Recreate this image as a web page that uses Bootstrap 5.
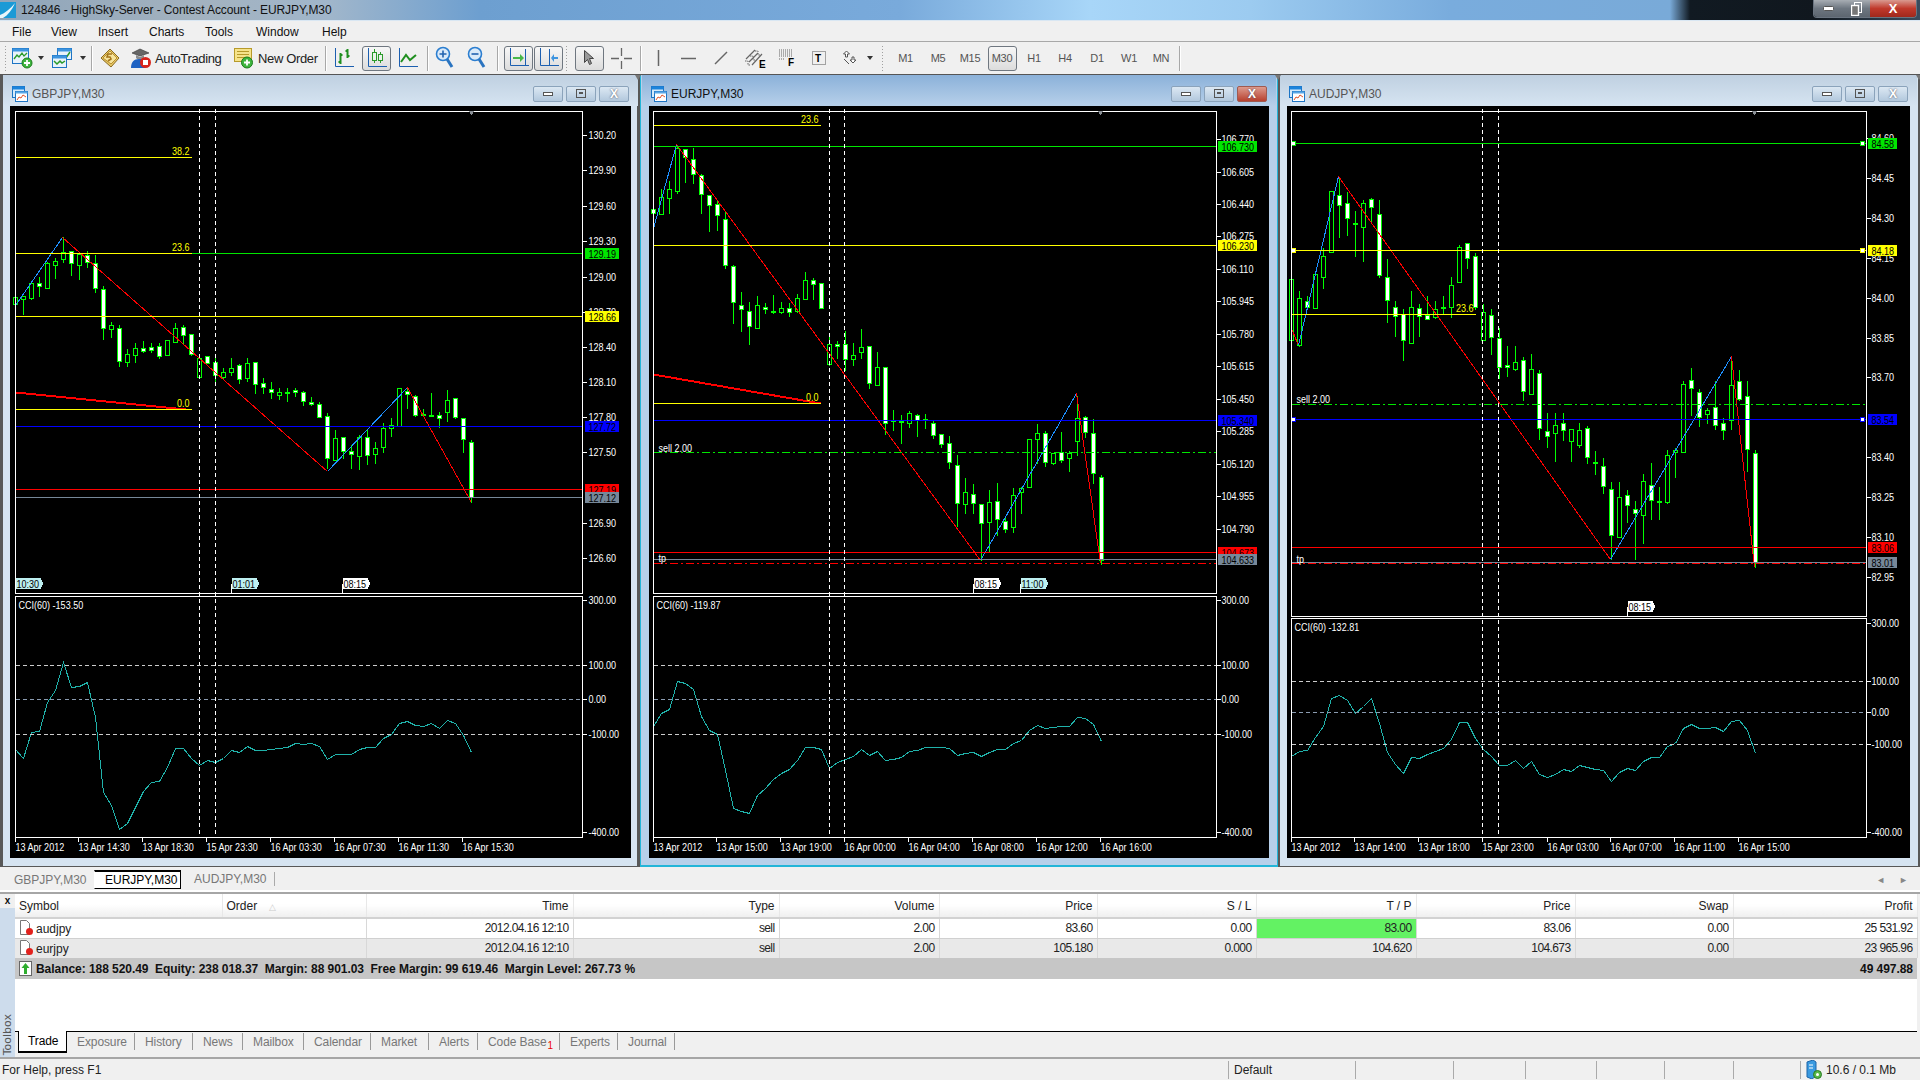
<!DOCTYPE html>
<html lang="en">
<head>
<meta charset="UTF-8">
<title>124846 - HighSky-Server - Contest Account - EURJPY,M30</title>
<link href="https://cdn.jsdelivr.net/npm/bootstrap@5.3.0/dist/css/bootstrap.min.css" rel="stylesheet">
<style>
html, body { height: 100%; }
body { width: 1920px; height: 1080px; overflow: hidden; background: #f0f0f0; color: #222; font: 12px/1 "Liberation Sans", sans-serif; }

/* title bar */
.titlebar { height: 21px; background: linear-gradient(90deg, #8fa5ba 0, #a3b2bf 200px, #a0b6cb 330px, #6d9fd0 480px, #79aadb 900px, #a8d6f8 1090px, #9ccbf0 1250px, #79acdd 1450px, #79aad8 1670px, #111a22 1690px, #10171e 1815px, #3a4c5e 1920px); border-bottom: 1px solid #d9e7f3; }
.titlebar .title { padding-left: 21px; letter-spacing: -.1px; line-height: 20px; color: #111; }
.titlebar .app-logo { position: absolute; left: 0; top: 2px; }
.caption-btns { position: absolute; right: 3px; top: 0; height: 18px; border: 1px solid #6a7480; border-top: 0; border-radius: 0 0 4px 4px; overflow: hidden; }
.caption-btns span { display: flex; align-items: center; justify-content: center; height: 17px; color: #fff; font: bold 13px/1 "Liberation Sans", sans-serif; }
.caption-btns .cb-min, .caption-btns .cb-max { width: 28px; background: linear-gradient(#a7adb3, #6d7680 50%, #5d6670); }
.caption-btns .cb-close { width: 46px; background: linear-gradient(#d99a90, #c0392b 50%, #a0281c); }

/* menu */
.menubar { display: grid; grid-template-columns: 39px 47px 51px 56px 51px 66px auto; height: 21px; padding: 2px 0 0 12px; align-items: center; color: #111; border-bottom: 1px solid #a8a8a8; }

/* toolbar */
.toolbar { display: grid; grid-template-columns: 8px 24px 13px 30px 11px 6px 32px 29px 73px 30px 62px 10px 28px 37px 26px 12px 24px 6px 28px 0 12px 30px 30px 8px 36px 28px 10px 27px 33px 32px 35px 30px 33px 30px 10px 15px 31px 34px 30px 34px 30px 32px 32px 32px 32px 4px; height: 32px; padding-left: 2px; align-items: center; justify-items: center; font-size: 13px; color: #222; }
.toolbar .lbl { justify-self: start; white-space: nowrap; letter-spacing: -.35px; }
.toolbar .sep { width: 1px; height: 25px; background: #a8a8a8; box-shadow: 1px 0 #fff; }
.toolbar .grip { width: 4px; height: 26px; background-image: radial-gradient(#a0a0a0 40%, transparent 45%); background-size: 3px 3px; }
.toolbar .ddn { width: 0; height: 0; border-left: 3.5px solid transparent; border-right: 3.5px solid transparent; border-top: 4px solid #333; }
.toolbar .tf { color: #555; font-size: 11px; letter-spacing: -.3px; }
.tool-on { display: flex; align-items: center; justify-content: center; width: 29px; height: 25px; border: 1px solid #6f7780; border-radius: 3px; background: linear-gradient(#f7f7f7, #dcdcdc); }
.tool-letter { font: bold 10px/1 "Liberation Sans", sans-serif; fill: #000; }

/* mdi windows */
.mdi { height: 793px; background: #585858; border-top: 1px solid #555; }
.win { height: 792px; position: relative; background: #d6e4f1; border: 1px solid #585858; border-top: 0; }
.win::before { content: ""; position: absolute; right: -4px; top: 0; border-left: 3px solid transparent; border-right: 3px solid transparent; border-top: 5px solid #777; z-index: 2; }
.win-1 { width: 636px; margin-left: 2px; padding: 0 6px 0 7px; }
.win-2 { width: 638px; margin-left: 2px; padding: 0 8px 0 8px; }
.win-3 { width: 640px; margin-left: 1px; padding: 0 8px 0 7px; }
.win-active { background: #b7d0ea; border-color: #23b5d8; border-bottom-width: 2px; }
.win-head { height: 31px; margin: 0 -7px; padding: 6px 9px 0; background: linear-gradient(#bfd0e1, #d6e4f1); color: #555; }
.win-active .win-head { background: linear-gradient(#8bb1d9, #b7d0ea); color: #111; }
.win-btn { display: flex; align-items: center; justify-content: center; width: 30px; height: 16px; margin-left: 3px; border: 1px solid #8ba3bb; border-radius: 2px; background: linear-gradient(#dce8f3, #b2c8dd); color: #4a5560; }
.win-btn.b-close { font: bold 12px/1 "Liberation Sans", sans-serif; color: #fff; text-shadow: 0 0 2px #445; }
.win-active .win-btn.b-close { background: linear-gradient(#dd9b8e, #b8402e); border-color: #a05a50; }
.chart-area { display: block; background: #000; width: 100%; height: 752px; }
.chart-area text { font: 11px "Liberation Sans", sans-serif; fill: #fff; }
.chart-area text.dark { fill: #000; }
.chart-area text.gold { fill: #ff0; }

/* chart tabs */
.doc-tabs { height: 25px; padding: 3px 0 0 2px; color: #777; position: relative; border-bottom: 2px solid #fff; }
.doc-tabs .tab { display: flex; align-items: center; height: 19px; padding-left: 12px; }
.doc-tabs .tab-1 { width: 92px; }
.doc-tabs .tab-2 { width: 87px; color: #000; background: #fff; border: 1px solid #000; border-top-width: 2px; border-left-color: #fff; border-bottom-width: 1px; padding-left: 10px; }
.doc-tabs .tab-3 { width: 94px; border-right: 1px solid #aaa; height: 14px; margin-top: 2px; padding-left: 13px; }
.doc-tabs .nav-arrows { margin-left: auto; padding-right: 12px; gap: 14px; color: #888; font-size: 9px; }

/* toolbox */
.toolbox { height: 165px; border-top: 2px solid #a6a6a6; }
.tb-strip { width: 15px; background: #cddcec; position: relative; color: #555; }
.tb-strip .tb-x { height: 14px; background: #f0f0f0; text-align: center; font: bold 10px/14px "Liberation Sans", sans-serif; color: #111; }
.tb-strip .tb-name { writing-mode: vertical-rl; transform: rotate(180deg); margin-top: auto; padding: 2px 0 3px; font: 11px/15px "DejaVu Sans", sans-serif; }
.terminal { width: 1902px; height: 137px; background: #fff; }
.terminal table { table-layout: fixed; width: 1902px; margin: 0; --bs-table-bg: transparent; font-size: 12px; color: #222; }
.terminal th, .terminal td { padding: 0 4px; border: 0; font-weight: 400; vertical-align: middle; white-space: nowrap; }
.terminal thead th { height: 24px; padding-top: 1px; background: linear-gradient(#fff 45%, #efefef); border-right: 1px solid #e8e8e8; border-bottom: 2px solid #d2d2d2; color: #222; }
.terminal tbody td { height: 20px; border-right: 1px solid #d8d8d8; border-bottom: 1px solid #d0d0d0; letter-spacing: -.6px; }
.terminal tbody td:first-child { letter-spacing: 0; border-right: 0; }
.terminal tbody tr.alt td { background: #e9e9e9; border-bottom: 0; }
.terminal tbody tr.total td { height: 21px; background: #c6c6c6; border: 0; font-weight: 700; color: #111; letter-spacing: -.05px; }
.terminal td.tp-hit { background: #63f263; }
.c-sym { width: 207px; } .c-ord { width: 144px; } .c-time { width: 207px; } .c-type { width: 206px; } .c-vol { width: 160px; }
.c-price { width: 158px; } .c-sl { width: 159px; } .c-tp { width: 160px; } .c-price2 { width: 159px; } .c-swap { width: 158px; } .c-profit { width: 184px; }
.sym-ic { margin-right: 2px; vertical-align: -3px; }
.sort-mark { color: #ccc; font-size: 9px; margin-left: 8px; }
.term-tabs { display: grid; grid-template-columns: 3px 49px 68px 58px 50px 61px 67px 58px 49px 82px 58px 57px; height: 26px; background: #f0f0f0; border-top: 1px solid #000; color: #777; letter-spacing: -.1px; }
.term-tabs .t { display: flex; align-items: center; height: 17px; padding-left: 10px; border-right: 1px solid #999; margin-top: 1px; }
.term-tabs .t-on { margin-top: -1px; height: 22px; background: #fff; color: #000; border: 1px solid #000; border-top: 0; border-bottom-width: 2px; padding-left: 9px; }
.term-tabs sub { color: #e00; font-size: 10px; bottom: -.4em; margin-left: 1px; }

/* status */
.statusbar { display: grid; grid-template-columns: 1228px 127px 98px 72px 71px 68px 69px 67px auto; height: 23px; border-top: 2px solid #a6a6a6; align-items: center; color: #222; }
.statusbar > div { height: 18px; line-height: 18px; padding-left: 5px; border-left: 1px solid #aaa; }
.statusbar > div:first-child { border: 0; padding-left: 2px; }
</style>
</head>
<body class="d-flex flex-column">

<!-- title bar -->
<div class="titlebar position-relative">
  <svg class="app-logo" width="16" height="16" viewBox="0 0 16 16"><rect width="16" height="16" fill="#1b9ad6"/><path d="M0 13C5 11 10 7 15 1 12 8 8 13 3 16H0z" fill="#e9f6fb"/></svg>
  <div class="title">124846 - HighSky-Server - Contest Account - EURJPY,M30</div>
  <div class="caption-btns d-flex">
    <span class="cb-min"><svg width="11" height="5"><rect x=".5" y=".5" width="10" height="4" rx="1" fill="#fff" stroke="#555"/></svg></span>
    <span class="cb-max"><svg width="11" height="14"><rect x="3.5" y=".5" width="7" height="10" fill="none" stroke="#fff"/><rect x=".5" y="3.5" width="7" height="10" fill="#777" stroke="#fff" stroke-width="1.4"/></svg></span>
    <span class="cb-close">X</span>
  </div>
</div>

<!-- menu -->
<div class="menubar"><span>File</span><span>View</span><span>Insert</span><span>Charts</span><span>Tools</span><span>Window</span><span>Help</span></div>

<!-- toolbar -->
<div class="toolbar">
  <span class="grip"></span>
  <svg width="22" height="22" viewBox="0 0 22 22"><rect x="1.5" y="1.5" width="16" height="15" fill="#e8f2fb" stroke="#1c74c4"/><rect x="1.5" y="1.5" width="16" height="3" fill="#3d94df"/><path d="M3 12l3-4 2 2 3-4 2 3 3-3" fill="none" stroke="#2a9a2a" stroke-width="1.3"/><circle cx="16" cy="16" r="5" fill="#3eb53e" stroke="#1d7d1d"/><path d="M16 13v6M13 16h6" stroke="#fff" stroke-width="1.8"/></svg>
  <span class="ddn"></span>
  <svg width="22" height="22" viewBox="0 0 22 22"><rect x="6.5" y="1.5" width="14" height="11" fill="#e8f2fb" stroke="#1c74c4"/><rect x="6.5" y="1.5" width="14" height="3" fill="#3d94df"/><path d="M12 9l3 2 4-6" fill="none" stroke="#2a9a2a" stroke-width="1.5"/><rect x="1.5" y="8.5" width="14" height="12" fill="#e8f2fb" stroke="#1c74c4"/><rect x="1.5" y="8.5" width="14" height="3" fill="#3d94df"/><path d="M3 14l3 3 3-3 2 2 3-2" fill="none" stroke="#2a9a2a" stroke-width="1.5"/></svg>
  <span class="ddn"></span>
  <span class="sep"></span>
  <svg width="22" height="22" viewBox="0 0 22 22"><path d="M2 11L11 2l9 9-8 9z" fill="#e7c766" stroke="#8a6a1f"/><path d="M4 11l7-7 7 7-6 6z" fill="#f6e39b" stroke="#b8902f"/><path d="M13 7H9l-1 3h3l1 2-3 2" fill="none" stroke="#a5761c" stroke-width="1.6"/></svg>
  <svg width="22" height="22" viewBox="0 0 22 22"><path d="M2 6l8-4 9 4-9 3z" fill="#666" stroke="#333" stroke-width=".6"/><path d="M6 8v3c2 2 6 2 8 0V8l-4 2z" fill="#8c8c8c"/><path d="M1 21c0-6 3-9 8-9s6 2 6 4v5z" fill="#1f62c2"/><circle cx="15.500" cy="15.500" r="5.500" fill="#d8241c"/><rect x="13" y="13" width="5" height="5" fill="#fff"/></svg>
  <span class="lbl">AutoTrading</span>
  <svg width="22" height="22" viewBox="0 0 22 22"><rect x="2.500" y="1.500" width="17" height="13" fill="#f6e38a" stroke="#b79a2a"/><path d="M5 4.500h12M5 7.500h12M5 10.500h12" stroke="#b79a2a"/><circle cx="15" cy="15.500" r="5.500" fill="#3eb53e" stroke="#1d7d1d"/><path d="M15 12.500v6M12 15.500h6" stroke="#fff" stroke-width="1.800"/></svg>
  <span class="lbl">New Order</span>
  <span class="sep"></span>
  <svg width="20" height="20" viewBox="0 0 20 20"><path d="M1.500 0v18.500H20" fill="none" stroke="#1c5fb0"/><path d="M6.500 5v11M4.500 14h2M6.500 7h2M13.500 1v9M11.500 3h2M13.500 8h2" fill="none" stroke="#1f8f1f" stroke-width="2"/></svg>
  <span class="tool-on"><svg width="20" height="20" viewBox="0 0 20 20"><path d="M1.500 0v18.500H20" fill="none" stroke="#1c5fb0"/><path d="M7.500 1v14M13.500 4v11" stroke="#2a9a2a"/><rect x="5.500" y="4.500" width="4" height="8" fill="#e9f5e9" stroke="#2a9a2a"/><rect x="11.500" y="6.500" width="4" height="6" fill="#e9f5e9" stroke="#2a9a2a"/></svg></span>
  <svg width="20" height="20" viewBox="0 0 20 20"><path d="M1.500 0v18.500H20" fill="none" stroke="#1c5fb0"/><path d="M3 14l5-7 4 5 6-5" fill="none" stroke="#1f8f1f" stroke-width="2"/></svg>
  <span class="sep"></span>
  <svg width="20" height="24" viewBox="0 0 20 24"><circle cx="8" cy="8" r="6.500" fill="#dbeaf9" stroke="#2b7ed0" stroke-width="1.600"/><path d="M8 4.500v7M4.500 8h7" stroke="#2263b0" stroke-width="1.600"/><path d="M12 13l5 8" stroke="#2a74c0" stroke-width="3"/></svg>
  <span></span>
  <svg width="20" height="24" viewBox="0 0 20 24"><circle cx="8" cy="8" r="6.500" fill="#dbeaf9" stroke="#2b7ed0" stroke-width="1.600"/><path d="M4.500 8h7" stroke="#2263b0" stroke-width="1.600"/><path d="M12 13l5 8" stroke="#2a74c0" stroke-width="3"/></svg>
  <span></span>
  <span class="sep"></span>
  <span class="tool-on"><svg width="21" height="20" viewBox="0 0 21 20"><path d="M2.500 0v17.500H21M17.500 1v16" fill="none" stroke="#1c5fb0"/><path d="M5 9h7V6l4 4-4 4v-3H5z" fill="#48b848"/></svg></span>
  <span class="tool-on"><svg width="21" height="20" viewBox="0 0 21 20"><path d="M2.500 0v17.500H21M11.500 1v16" fill="none" stroke="#1c5fb0"/><path d="M20 9h-4V6l-3 4 3 4v-3h4z" fill="#3d94df"/></svg></span>
  <span class="grip"></span>
  <span class="tool-on"><svg width="14" height="18" viewBox="0 0 14 18"><path d="M2.500 1.500v12l3-3 2 5 2-1-2-5h4z" fill="#9a9a9a" stroke="#444"/></svg></span>
  <svg width="21" height="21" viewBox="0 0 21 21" stroke="#666" stroke-width="1.300"><path d="M10.500 0v8M10.500 13v8M0 10.500h8M13 10.500h8"/></svg>
  <span class="sep"></span>
  <svg width="3" height="16"><path d="M1.500 0v16" stroke="#666" stroke-width="1.500"/></svg>
  <svg width="15" height="3"><path d="M0 1.500h15" stroke="#666" stroke-width="1.500"/></svg>
  <svg width="14" height="14"><path d="M1 13L13 1" stroke="#666" stroke-width="1.500"/></svg>
  <svg width="22" height="22" viewBox="0 0 22 22" fill="none" stroke="#666"><path d="M2 12l9-9M5 15l9-9M8 18l10-11" stroke-width="1.200"/><path d="M1 14h3v4h3M6 9h3v4h3M11 4h3v4h3" stroke-dasharray="1.500 1"/><text x="15" y="21" class="tool-letter" stroke="none">E</text></svg>
  <svg width="18" height="20" viewBox="0 0 18 20"><path d="M1 2h14M1 4h14M1 6h14M1 8h14M1 11h5" stroke="#666" stroke-dasharray="1 1"/><text x="10" y="18" class="tool-letter">F</text></svg>
  <svg width="16" height="16" viewBox="0 0 16 16"><rect x="1.500" y="1.500" width="13" height="13" fill="none" stroke="#555" stroke-dasharray="1 1"/><text x="4" y="12" class="tool-letter">T</text></svg>
  <svg width="16" height="16" viewBox="0 0 16 16" fill="#fff" stroke="#555"><path d="M4.500 1l3 3H5.500v3h-2V4h-2z"/><path d="M8 10l3 3 3-3h-2V7h-2v3z"/><path d="M2 9l5 5" fill="none"/></svg>
  <span class="ddn"></span>
  <span class="grip"></span>
  <span class="tf">M1</span><span class="tf">M5</span><span class="tf">M15</span>
  <span class="tool-on tf">M30</span>
  <span class="tf">H1</span><span class="tf">H4</span><span class="tf">D1</span><span class="tf">W1</span><span class="tf">MN</span>
  <span class="sep"></span>
</div>

<!-- chart windows -->
<div class="mdi d-flex">
  <div class="win win-1">
    <div class="win-head d-flex align-items-center">
      <svg class="me-1" width="16" height="16" viewBox="0 0 16 16"><rect x=".5" y=".5" width="12" height="11" fill="#d6eafa" stroke="#1c74c4"/><rect x=".5" y=".5" width="12" height="3" fill="#1c84dc"/><rect x="3.500" y="5.500" width="12" height="10" fill="#fff" stroke="#1c74c4"/><rect x="3.500" y="5.500" width="12" height="2" fill="#5aa7e6"/><path d="M5 14l2-3 2 1 2-3 3 2" fill="none" stroke="#e0532a"/></svg>
      <span>GBPJPY,M30</span>
      <div class="d-flex ms-auto">
        <span class="win-btn"><svg width="10" height="4"><rect x=".5" y=".5" width="9" height="3" fill="#fff" stroke="#555"/></svg></span>
        <span class="win-btn"><svg width="10" height="9"><rect x=".5" y=".5" width="9" height="8" fill="none" stroke="#555"/><rect x="3" y="3" width="4" height="2" fill="#555"/></svg></span>
        <span class="win-btn b-close">X</span>
      </div>
    </div>
    <svg class="chart-area" id="chart-gbp"></svg>
  </div>
  <div class="win win-2 win-active">
    <div class="win-head d-flex align-items-center">
      <svg class="me-1" width="16" height="16" viewBox="0 0 16 16"><rect x=".5" y=".5" width="12" height="11" fill="#d6eafa" stroke="#1c74c4"/><rect x=".5" y=".5" width="12" height="3" fill="#1c84dc"/><rect x="3.500" y="5.500" width="12" height="10" fill="#fff" stroke="#1c74c4"/><rect x="3.500" y="5.500" width="12" height="2" fill="#5aa7e6"/><path d="M5 14l2-3 2 1 2-3 3 2" fill="none" stroke="#e0532a"/></svg>
      <span>EURJPY,M30</span>
      <div class="d-flex ms-auto">
        <span class="win-btn"><svg width="10" height="4"><rect x=".5" y=".5" width="9" height="3" fill="#fff" stroke="#555"/></svg></span>
        <span class="win-btn"><svg width="10" height="9"><rect x=".5" y=".5" width="9" height="8" fill="none" stroke="#555"/><rect x="3" y="3" width="4" height="2" fill="#555"/></svg></span>
        <span class="win-btn b-close">X</span>
      </div>
    </div>
    <svg class="chart-area" id="chart-eur"></svg>
  </div>
  <div class="win win-3">
    <div class="win-head d-flex align-items-center">
      <svg class="me-1" width="16" height="16" viewBox="0 0 16 16"><rect x=".5" y=".5" width="12" height="11" fill="#d6eafa" stroke="#1c74c4"/><rect x=".5" y=".5" width="12" height="3" fill="#1c84dc"/><rect x="3.500" y="5.500" width="12" height="10" fill="#fff" stroke="#1c74c4"/><rect x="3.500" y="5.500" width="12" height="2" fill="#5aa7e6"/><path d="M5 14l2-3 2 1 2-3 3 2" fill="none" stroke="#e0532a"/></svg>
      <span>AUDJPY,M30</span>
      <div class="d-flex ms-auto">
        <span class="win-btn"><svg width="10" height="4"><rect x=".5" y=".5" width="9" height="3" fill="#fff" stroke="#555"/></svg></span>
        <span class="win-btn"><svg width="10" height="9"><rect x=".5" y=".5" width="9" height="8" fill="none" stroke="#555"/><rect x="3" y="3" width="4" height="2" fill="#555"/></svg></span>
        <span class="win-btn b-close">X</span>
      </div>
    </div>
    <svg class="chart-area" id="chart-aud"></svg>
  </div>
</div>

<!-- chart tabs -->
<div class="doc-tabs d-flex">
  <div class="tab tab-1">GBPJPY,M30</div>
  <div class="tab tab-2">EURJPY,M30</div>
  <div class="tab tab-3">AUDJPY,M30</div>
  <div class="nav-arrows d-flex align-items-center"><span>&#9668;</span><span>&#9658;</span></div>
</div>

<!-- terminal -->
<div class="toolbox d-flex">
  <div class="tb-strip d-flex flex-column">
    <div class="tb-x">x</div>
    <div class="tb-name">Toolbox</div>
  </div>
  <div>
    <div class="terminal">
      <table class="table">
        <colgroup><col class="c-sym"><col class="c-ord"><col class="c-time"><col class="c-type"><col class="c-vol"><col class="c-price"><col class="c-sl"><col class="c-tp"><col class="c-price2"><col class="c-swap"><col class="c-profit"></colgroup>
        <thead>
          <tr>
            <th>Symbol</th><th>Order <span class="sort-mark">&#9651;</span></th>
            <th class="text-end">Time</th><th class="text-end">Type</th><th class="text-end">Volume</th><th class="text-end">Price</th>
            <th class="text-end">S / L</th><th class="text-end">T / P</th><th class="text-end">Price</th><th class="text-end">Swap</th><th class="text-end">Profit</th>
          </tr>
        </thead>
        <tbody>
          <tr>
            <td><svg class="sym-ic" width="15" height="16" viewBox="0 0 15 16"><path d="M1.500.5h6l3 3v11h-9z" fill="#fff" stroke="#777"/><circle cx="10.500" cy="11.500" r="3.500" fill="#e2211c"/></svg>audjpy</td><td></td>
            <td class="text-end">2012.04.16 12:10</td><td class="text-end">sell</td><td class="text-end">2.00</td><td class="text-end">83.60</td>
            <td class="text-end">0.00</td><td class="text-end tp-hit">83.00</td><td class="text-end">83.06</td><td class="text-end">0.00</td><td class="text-end">25 531.92</td>
          </tr>
          <tr class="alt">
            <td><svg class="sym-ic" width="15" height="16" viewBox="0 0 15 16"><path d="M1.500.5h6l3 3v11h-9z" fill="#fff" stroke="#777"/><circle cx="10.500" cy="11.500" r="3.500" fill="#e2211c"/></svg>eurjpy</td><td></td>
            <td class="text-end">2012.04.16 12:10</td><td class="text-end">sell</td><td class="text-end">2.00</td><td class="text-end">105.180</td>
            <td class="text-end">0.000</td><td class="text-end">104.620</td><td class="text-end">104.673</td><td class="text-end">0.00</td><td class="text-end">23 965.96</td>
          </tr>
          <tr class="total">
            <td colspan="8"><svg class="sym-ic" width="15" height="15" viewBox="0 0 15 15"><rect x=".5" y=".5" width="12" height="14" fill="#fff" stroke="#666"/><path d="M6.500 2l4 5H8v6H5V7H2.500z" fill="#2fae2f"/></svg>Balance: 188 520.49&nbsp; Equity: 238 018.37&nbsp; Margin: 88 901.03&nbsp; Free Margin: 99 619.46&nbsp; Margin Level: 267.73 %</td>
            <td></td><td></td><td class="text-end">49 497.88</td>
          </tr>
        </tbody>
      </table>
    </div>
    <div class="term-tabs">
      <span></span>
      <div class="t t-on">Trade</div><div class="t">Exposure</div><div class="t">History</div><div class="t">News</div><div class="t">Mailbox</div>
      <div class="t">Calendar</div><div class="t">Market</div><div class="t">Alerts</div><div class="t">Code Base<sub>1</sub></div><div class="t">Experts</div><div class="t">Journal</div>
    </div>
  </div>
</div>

<!-- status bar -->
<div class="statusbar">
  <div>For Help, press F1</div><div>Default</div><div></div><div></div><div></div><div></div><div></div><div></div>
  <div class="d-flex align-items-center gap-1"><svg width="16" height="19" viewBox="0 0 16 19"><path d="M1 2l6-2 3 2v14l-4 3-5-2z" fill="#3a9ae0" stroke="#1c64a8"/><path d="M3 5h4M3 8h4" stroke="#fff"/><circle cx="11.500" cy="14.500" r="4" fill="#58b848" stroke="#2a7a22"/><circle cx="11.500" cy="14.500" r="1.500" fill="#fff"/></svg><span class="text-nowrap">10.6 / 0.1 Mb</span></div>
</div>

<script src="https://cdn.jsdelivr.net/npm/bootstrap@5.3.0/dist/js/bootstrap.bundle.min.js"></script>
<script>
// candles are [high, top, bottom, low, filled], all y values read off the zoomed reference
const GBP = [[592,592,612,615,0],[585,588,596,642,0],[545,548,593,597,0],[528,549,557,588,1],[483,490,563,563,0],[470,482,494,535,0],[408,455,476,485,0],[450,452,488,525,1],[455,462,494,537,0],[450,464,485,500,1],[462,488,563,575,1],[555,566,683,717,1],[663,676,686,711,0],[672,683,782,798,1],[745,761,785,798,0],[725,743,765,785,0],[720,745,752,755,1],[725,741,749,755,1],[727,737,767,773,1],[720,721,765,765,0],[665,685,725,725,0],[672,682,704,730,1],[700,701,762,764,1],[775,775,830,830,0],[765,769,788,790,1],[768,785,824,845,1],[800,817,830,835,0],[770,803,815,825,0],[790,796,836,848,1],[770,790,833,843,0],[787,787,853,878,1],[830,850,862,878,1],[843,866,875,893,1],[862,877,885,897,0],[862,875,878,902,0],[862,871,875,888,1],[870,877,904,915,1],[888,907,912,916,1],[903,913,952,952,1],[935,949,1073,1105,1],[988,1015,1079,1079,0],[1010,1012,1053,1075,1],[1033,1052,1063,1103,1],[1003,1010,1067,1107,0],[985,1010,1066,1092,1],[1023,1045,1062,1090,0],[965,983,1042,1055,0],[952,974,985,1007,0],[865,865,977,977,0],[862,872,882,925,1],[883,889,945,947,1],[925,943,946,948,0],[877,945,946,946,0],[932,944,955,982,1],[867,901,935,963,0],[893,895,950,953,1],[950,953,1018,1055,1],[1018,1027,1192,1205,1]];
const EUR = [[328,328,338,338,1],[265,292,343,343,0],[240,268,295,340,0],[135,143,272,278,0],[143,148,172,245,1],[140,176,223,248,1],[220,224,283,340,1],[283,284,316,392,1],[300,311,346,390,1],[330,358,494,503,1],[492,498,607,668,1],[573,615,627,692,1],[603,632,679,732,1],[585,616,685,685,0],[605,620,627,640,1],[582,632,637,640,1],[603,625,637,640,0],[605,623,636,648,1],[578,595,634,635,0],[513,541,596,596,0],[530,539,553,597,1],[545,550,623,625,1],[708,733,793,795,0],[720,731,739,773,1],[690,733,778,810,1],[727,764,776,795,0],[685,742,757,773,0],[737,739,850,863,1],[753,802,856,856,0],[800,800,970,1003,1],[927,960,963,990,0],[942,963,967,1028,1],[930,940,970,982,0],[940,944,960,1007,1],[940,958,961,985,0],[958,968,1006,1015,1],[998,1003,1033,1040,1],[1005,1030,1085,1105,1],[1062,1094,1210,1278,1],[1130,1175,1213,1240,0],[1150,1181,1210,1240,1],[1210,1213,1270,1380,1],[1167,1207,1265,1355,0],[1147,1204,1258,1305,1],[1250,1262,1287,1295,1],[1162,1184,1282,1295,0],[1158,1165,1175,1240,0],[1015,1018,1162,1162,0],[970,998,1017,1090,0],[990,1000,1087,1097,1],[1055,1058,1090,1093,0],[993,1057,1081,1085,1],[1050,1060,1075,1112,0],[885,953,1024,1065,0],[945,951,997,1012,1],[955,998,1120,1148,1],[1122,1130,1380,1392,1]];
const AUD = [[538,538,720,720,0],[570,595,735,738,0],[585,602,620,625,1],[515,523,625,625,0],[440,467,530,563,0],[270,274,457,457,0],[230,284,316,410,1],[273,308,355,405,1],[330,370,372,467,0],[298,308,380,483,0],[292,298,322,365,1],[298,341,525,530,1],[473,530,601,665,1],[600,620,649,708,1],[623,643,721,780,1],[570,620,730,730,0],[610,625,649,708,1],[585,645,658,658,1],[600,626,650,655,0],[585,620,625,640,1],[528,554,620,650,0],[432,442,547,547,0],[426,428,475,505,1],[455,467,620,628,1],[608,635,721,721,0],[625,644,712,762,1],[680,713,802,833,1],[735,794,802,828,1],[735,785,808,810,0],[768,779,873,900,1],[760,808,881,881,0],[807,818,985,1017,1],[937,992,1009,1040,1],[937,976,1000,1083,0],[937,968,991,1020,1],[985,986,1024,1083,0],[966,991,1034,1040,0],[975,985,1072,1088,1],[1050,1087,1089,1122,0],[1072,1097,1158,1180,1],[1143,1168,1304,1376,1],[1143,1192,1312,1312,0],[1167,1184,1215,1267,1],[1200,1226,1240,1377,1],[1118,1144,1246,1330,0],[1086,1154,1200,1256,1],[1158,1202,1207,1256,0],[1048,1064,1207,1210,0],[1040,1050,1057,1130,0],[840,851,1057,1057,0],[801,841,865,945,1],[865,875,951,978,1],[922,929,943,968,0],[840,922,976,988,1],[952,968,990,1016,1],[770,856,961,987,0],[808,842,897,900,1],[840,889,1048,1112,1],[1048,1058,1385,1400,1]];

const charts = [
  { id: 'chart-gbp', base: 0, ox: 10, x0: 36, right: 1427, mainBottom: 487, panelTop: 490, candles: GBP,
    cci: [477,505,427,423,335,300,215,292,288,277,380,605,645,717,700,650,603,577,574,530,475,475,503,525,511,515,505,481,486,467,481,481,478,475,470,458,463,460,467,508,493,493,493,476,472,472,445,433,398,394,405,409,400,415,390,400,435,485],
    cciText: 'CCI(60) -153.50', levels: [226,328,433], lvlLabels: [[30,'300.00'],[226,'100.00'],[326,'0.00'],[433,'-100.00'],[725,'-400.00']],
    vlines: [487,526], top: 1153, labelX: 1440, boxX: 1433, boxW: 84,
    scale: [[105,'130.20'],[211,'129.90'],[319,'129.60'],[424,'129.30'],[530,'129.00'],[635,'128.70'],[742,'128.40'],[847,'128.10'],[952,'127.80'],[1057,'127.50'],[1270,'126.90'],[1375,'126.60']],
    hlines: [[460,'#00e600',468],[647,'#ffff00'],[979,'#0000ff'],[1168,'#ff0000'],[1192,'#778899']],
    boxes: [[460,'129.19','#00e600'],[647,'128.66','#ffff00'],[979,'127.72','#0000ff'],[1167,'127.19','#ff0000'],[1192,'127.12','#778899']],
    fib: [[172,'38.2',468],[460,'23.6',468],[928,'0.0',468]],
    trend: [36,876,454,926], zig: [['#1e90ff',36,615,153,410],['#ff0000',153,410,800,1113],['#1e90ff',800,1113,996,862],['#ff0000',996,862,1153,1205]],
    marks: [[36,'10:30','#bdeff0'],[565,'01:01','#bdeff0'],[839,'08:15','#fff']], markY: 1450,
    ticks: [36,192,349,505,662,819,976,1133], times: ['13 Apr 2012','13 Apr 14:30','13 Apr 18:30','15 Apr 23:30','16 Apr 03:30','16 Apr 07:30','16 Apr 11:30','16 Apr 15:30'] },
  { id: 'chart-eur', base: 640, ox: 649, x0: 31, right: 1410, mainBottom: 487, panelTop: 490, candles: EUR,
    cci: [408,370,358,273,280,298,378,420,432,540,655,663,670,615,595,567,550,538,510,472,472,476,533,517,508,497,478,495,484,511,508,501,484,480,472,472,472,475,495,490,487,498,485,476,478,460,451,420,406,415,412,407,409,382,385,403,452],
    cciText: 'CCI(60) -119.87', levels: [226,328,433], lvlLabels: [[30,'300.00'],[226,'100.00'],[326,'0.00'],[433,'-100.00'],[725,'-400.00']],
    vlines: [462,501], top: 1128, labelX: 1423, boxX: 1417, boxW: 95,
    scale: [[118,'106.770'],[217,'106.605'],[313,'106.440'],[408,'106.275'],[508,'106.110'],[604,'105.945'],[703,'105.780'],[799,'105.615'],[898,'105.450'],[994,'105.285'],[1093,'105.120'],[1189,'104.955'],[1288,'104.790']],
    hlines: [[139,'#00e600'],[436,'#ffff00'],[961,'#0000ff'],[1357,'#ff0000'],[1378,'#778899']],
    boxes: [[139,'106.730','#00e600'],[436,'106.230','#ffff00'],[961,'105.340','#0000ff'],[1357,'104.673','#ff0000'],[1378,'104.633','#778899']],
    dashed: [[1057,'#00e600','sell 2.00',43,1040],[1388,'#ff0000','tp',43,1370]],
    fib: [[76,'23.6',442],[910,'0.0',442]],
    trend: [33,822,442,908], zig: [['#1e90ff',33,385,89,133],['#ff0000',89,133,834,1380],['#1e90ff',834,1380,1069,880],['#ff0000',1069,880,1128,1390]],
    marks: [[815,'08:15','#fff'],[932,'11:00','#bdeff0']], markY: 1450,
    ticks: [31,187,344,501,657,814,971,1128], times: ['13 Apr 2012','13 Apr 15:00','13 Apr 19:00','16 Apr 00:00','16 Apr 04:00','16 Apr 08:00','16 Apr 12:00','16 Apr 16:00'] },
  { id: 'chart-aud', base: 1280, ox: 1287, x0: 26, right: 1435, mainBottom: 510, panelTop: 512, candles: AUD,
    cci: [497,484,480,440,408,324,316,330,369,347,324,400,487,522,550,501,505,493,482,475,447,397,397,443,478,497,525,524,511,535,513,551,562,551,538,544,525,531,537,541,572,545,535,541,512,502,502,468,458,413,403,414,414,411,424,394,391,420,490],
    cciText: 'CCI(60) -132.81', levels: [273,367,463], lvlLabels: [[100,'300.00'],[273,'100.00'],[365,'0.00'],[463,'-100.00'],[725,'-400.00']],
    vlines: [496,535], top: 1162, labelX: 1447, boxX: 1441, boxW: 71,
    scale: [[115,'84.60'],[235,'84.45'],[355,'84.30'],[475,'84.15'],[595,'84.00'],[713,'83.85'],[832,'83.70'],[1072,'83.40'],[1192,'83.25'],[1311,'83.10'],[1432,'82.95']],
    hlines: [[130,'#00e600'],[449,'#ffff00'],[958,'#0000ff'],[1342,'#ff0000'],[1385,'#778899']],
    boxes: [[130,'84.58','#00e600'],[449,'84.18','#ffff00'],[958,'83.54','#0000ff'],[1342,'83.06','#ff0000'],[1385,'83.01','#778899']],
    handles: [[130,'#00e600'],[449,'#ffff00'],[958,'#0000ff']],
    dashed: [[913,'#00e600','sell 2.00',38,895],[1390,'#ff0000','tp',38,1373]],
    fib: [[643,'23.6',477]],
    zig: [['#ff0000',26,685,45,735],['#1e90ff',45,735,143,228],['#ff0000',143,228,809,1376],['#1e90ff',809,1376,1104,768],['#ff0000',1104,768,1162,1400]],
    marks: [[849,'08:15','#fff']], markY: 1519,
    ticks: [26,182,339,496,653,809,966,1123], times: ['13 Apr 2012','13 Apr 14:00','13 Apr 18:00','15 Apr 23:00','16 Apr 03:00','16 Apr 07:00','16 Apr 11:00','16 Apr 15:00'] }
];

charts.forEach(c => {
  const X = zx => Math.round(c.base + zx / 2.45 - c.ox) + .5;
  const Y = zy => Math.round(zy / 3 - 6) + .5;
  const P = zy => Math.round(zy / 3 + 484) + .5;   // indicator panel
  const L = X(c.x0), R = X(c.right), out = [];
  const line = (x1, y1, x2, y2, col, extra = '') => `<line x1="${x1}" y1="${y1}" x2="${x2}" y2="${y2}" stroke="${col}" ${extra}/>`;
  const text = (x, y, s, cls = '', extra = '') => `<text x="${x}" y="${y}" class="${cls}" ${extra}>${s}</text>`;

  out.push('<g shape-rendering="crispEdges">');

  // candles
  c.candles.forEach((b, i) => {
    const x = X(c.x0 + i * 19.6);
    out.push(line(x, Y(b[0]), x, Y(b[3]), '#00ff00'));
    out.push(`<rect x="${x - 2}" y="${Y(b[1])}" width="4" height="${Math.max(Y(b[2]) - Y(b[1]), 1)}" fill="${b[4] ? '#fff' : '#000'}" stroke="#00ff00"/>`);
  });

  // cci
  out.push(`<polyline fill="none" stroke="#20b2aa" points="${c.cci.map((v, i) => X(c.x0 + i * 19.6) + ',' + P(v)).join(' ')}"/>`);

  // trend, zigzag
  if (c.trend) out.push(line(X(c.trend[0]), Y(c.trend[1]), X(c.trend[2]), Y(c.trend[3]), '#ff0000', 'stroke-width="2"'));
  c.zig.forEach(z => out.push(line(X(z[1]), Y(z[2]), X(z[3]), Y(z[4]), z[0])));

  // horizontal objects
  c.hlines.forEach(h => out.push(line(h[2] ? X(h[2]) : L, Y(h[0]), R, Y(h[0]), h[1])));
  c.fib.forEach(f => {
    out.push(line(L, Y(f[0]), X(f[2]), Y(f[0]), '#ffff00'));
    out.push(text(X(f[2]) - 2, Y(f[0]) - 3, f[1], 'gold', 'text-anchor="end"'));
  });
  (c.dashed || []).forEach(d => {
    out.push(line(L, Y(d[0]), R, Y(d[0]), d[1], 'stroke-dasharray="8 3 2 3"'));
    out.push(text(X(d[3]), Y(d[4]) + 4, d[2]));
  });
  (c.handles || []).forEach(h => [33, 1427].forEach(x => out.push(`<rect x="${X(x) - 2}" y="${Y(h[0]) - 2}" width="4" height="4" fill="#fff" stroke="${h[1]}"/>`)));

  // session separators
  c.vlines.forEach(v => out.push(line(X(v), 3, X(v), 731, '#fff', 'stroke-dasharray="4 3"')));
  // indicator levels
  c.levels.forEach((l, i) => out.push(line(L, P(l), R, P(l), i === 1 ? '#8a9bb0' : '#ccc', 'stroke-dasharray="4 3"')));

  // frames
  out.push(`<rect x="${L}" y="5.500" width="${R - L}" height="${c.mainBottom - 5}" fill="none" stroke="#fff"/>`);
  out.push(`<rect x="${L}" y="${c.panelTop + .5}" width="${R - L}" height="${731 - c.panelTop}" fill="none" stroke="#fff"/>`);

  // price scale
  c.scale.forEach(s => {
    out.push(line(R, Y(s[0]), R + 4, Y(s[0]), '#fff'));
    out.push(text(X(c.labelX), Y(s[0]) + 3, s[1]));
  });
  c.lvlLabels.forEach(s => {
    out.push(line(R, P(s[0]), R + 4, P(s[0]), '#fff'));
    out.push(text(X(c.labelX), P(s[0]) + 3, s[1]));
  });
  c.boxes.forEach(b => {
    out.push(`<rect x="${X(c.boxX) - .5}" y="${Y(b[0]) - 5.5}" width="${Math.round(c.boxW / 2.45)}" height="11" fill="${b[2]}"/>`);
    out.push(text(X(c.labelX), Y(b[0]) + 4, b[1], 'dark'));
  });

  // time axis
  c.ticks.forEach((t, i) => {
    out.push(line(X(t), 731, X(t), 736, '#fff'));
    out.push(text(X(t), 745, c.times[i]));
  });
  // marks on the time axis
  c.marks.forEach(m => {
    const x = X(m[0]), y = Y(c.markY);
    out.push(line(x, y, x, c.mainBottom, '#fff'));
    out.push(`<path d="M${x} ${y - 5.5}h25l3 5.500-3 5.500h-25z" fill="${m[2]}"/>`);
    out.push(text(x + 1, y + 4, m[1], 'dark'));
  });

  out.push(text(X(c.x0) + 3, c.panelTop + 13, c.cciText));
  out.push(`<path d="M${X(c.top) - 3} 5l3 4 3-4z" fill="#8a8f95"/>`);
  out.push('</g>');

  const svg = document.getElementById(c.id);
  svg.innerHTML = out.join('');
  // the terminal's font is narrower than Arial, so squeeze every chart label
  svg.querySelectorAll('text').forEach(t => {
    t.setAttribute('textLength', (t.getComputedTextLength() * .82).toFixed(1));
    t.setAttribute('lengthAdjust', 'spacingAndGlyphs');
  });
});
</script>
</body>
</html>
